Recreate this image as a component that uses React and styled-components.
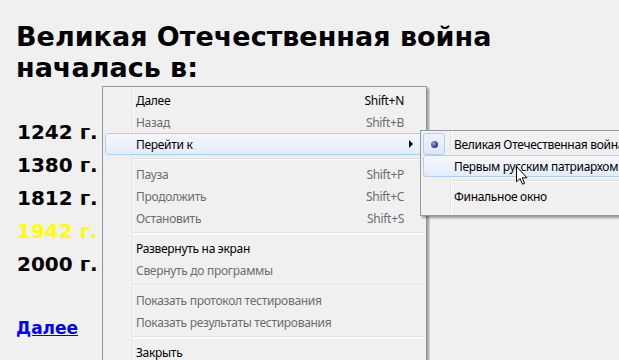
import React from "react";
import styled, { createGlobalStyle } from "styled-components";

const Global = createGlobalStyle`
  html, body { margin: 0; padding: 0; background: #f0f0f0; overflow: hidden; }
  body { width: 619px; height: 360px; position: relative; }
`;

const Page = styled.div`
  position: relative;
  width: 619px;
  height: 360px;
  overflow: hidden;
  background: #f0f0f0;
  padding-left: 16px;
  box-sizing: border-box;
  font-family: "DejaVu Sans", Verdana, sans-serif;
`;

const Title = styled.h1`
  margin: 21px 0 0;
  font-size: 27px;
  line-height: 31px;
  font-weight: bold;
  color: #000;
  width: 560px;
`;

const Years = styled.ul`
  list-style: none;
  margin: 33px 0 0;
  padding: 0 0 0 1px;
`;

const Year = styled.li`
  font-size: 20px;
  line-height: 33px;
  font-weight: bold;
  color: ${(p) => (p.$correct ? "#ffff00" : "#000")};
`;

const NextLink = styled.a`
  display: inline-block;
  margin-top: 35px;
  font-size: 17px;
  line-height: 24px;
  font-weight: bold;
  color: #0000ff;
  text-decoration: underline;
`;

const Menu = styled.div`
  position: absolute;
  left: ${(p) => p.$left}px;
  top: ${(p) => p.$top}px;
  width: ${(p) => p.$width}px;
  box-sizing: border-box;
  padding: 2px 2px ${(p) => p.$padBottom}px;
  border: 1px solid #979797;
  box-shadow: 2px 2px 2px rgba(0, 0, 0, 0.35);
  background:
    linear-gradient(to right, transparent 29px, #e2e3e3 29px, #e2e3e3 30px, #ffffff 30px, #ffffff 31px, transparent 31px),
    #f0f0f0;
  font-family: "Noto Sans", "Open Sans", sans-serif;
  font-size: 12px;
  letter-spacing: -0.3px;
  white-space: nowrap;
`;

const Item = styled.div`
  position: relative;
  display: flex;
  align-items: center;
  height: 22px;
  box-sizing: border-box;
  padding: 0 ${(p) => (p.$arrow ? 10 : 19)}px 0 30px;
  color: ${(p) => (p.$disabled ? "#6d6d6d" : "#000")};
  border: 1px solid ${(p) => (p.$hover ? "#aecff7" : "transparent")};
  border-radius: 3px;
  background: ${(p) =>
    p.$hover ? "linear-gradient(to bottom, #f4f8fd 0%, #edf3fb 50%, #e3ecf9 100%)" : "transparent"};
`;

const Label = styled.span`
  flex: 1;
`;

const Shortcut = styled.span`
  margin-left: 20px;
`;

const Arrow = styled.span`
  width: 0;
  height: 0;
  border-top: 4px solid transparent;
  border-bottom: 4px solid transparent;
  border-left: 4px solid #000;
`;

const Separator = styled.div`
  height: 8px;
  margin-left: 28px;
  display: flex;
  flex-direction: column;
  justify-content: center;
  &::before {
    content: "";
    display: block;
    height: 1px;
    background: #e0e0e0;
  }
  &::after {
    content: "";
    display: block;
    height: 1px;
    background: #ffffff;
  }
`;

const CheckBox = styled.span`
  position: absolute;
  left: -1px;
  top: -1px;
  width: 22px;
  height: 22px;
  box-sizing: border-box;
  border: 1px solid #aecff7;
  border-radius: 3px;
  background: linear-gradient(to bottom, #eef4fc, #dde8f8);
  display: flex;
  align-items: center;
  justify-content: center;
`;

const Dot = styled.span`
  width: 7px;
  height: 7px;
  border-radius: 50%;
  background: radial-gradient(circle at 35% 35%, #9a9ee8 0%, #3d3f9c 60%, #24265e 100%);
`;

const Cursor = styled.svg`
  position: absolute;
  left: 516px;
  top: 166px;
`;

const mainItems = [
  { t: "Далее", s: "Shift+N" },
  { t: "Назад", s: "Shift+B", d: true },
  { t: "Перейти к", arrow: true, hover: true },
  "sep",
  { t: "Пауза", s: "Shift+P", d: true },
  { t: "Продолжить", s: "Shift+C", d: true },
  { t: "Остановить", s: "Shift+S", d: true },
  "sep",
  { t: "Развернуть на экран" },
  { t: "Свернуть до программы", d: true },
  "sep",
  { t: "Показать протокол тестирования", d: true },
  { t: "Показать результаты тестирования", d: true },
  "sep",
  { t: "Закрыть" },
];

export default function App() {
  return (
    <>
      <Global />
      <Page>
        <Title>Великая Отечественная война началась в:</Title>
        <Years>
          <Year>1242 г.</Year>
          <Year>1380 г.</Year>
          <Year>1812 г.</Year>
          <Year $correct>1942 г.</Year>
          <Year>2000 г.</Year>
        </Years>
        <NextLink href="#">Далее</NextLink>

        <Menu $left={102} $top={86} $width={325} $padBottom={2}>
          {mainItems.map((it, i) =>
            it === "sep" ? (
              <Separator key={i} />
            ) : (
              <Item key={i} $disabled={it.d} $hover={it.hover} $arrow={it.arrow}>
                <Label>{it.t}</Label>
                {it.s && <Shortcut>{it.s}</Shortcut>}
                {it.arrow && <Arrow />}
              </Item>
            )
          )}
        </Menu>

        <Menu $left={420} $top={130} $width={230} $padBottom={8}>
          <Item>
            <CheckBox>
              <Dot />
            </CheckBox>
            <Label>Великая Отечественная война</Label>
          </Item>
          <Item $hover>
            <Label>Первым русским патриархом</Label>
          </Item>
          <Separator />
          <Item>
            <Label>Финальное окно</Label>
          </Item>
        </Menu>

        <Cursor width="12" height="19" viewBox="0 0 12 19">
          <path
            d="M0.5 0.5 L0.5 16 L4 12.5 L6.5 18.2 L8.6 17.3 L6.2 11.8 L11 11.8 Z"
            fill="#fff"
            stroke="#000"
            strokeWidth="1"
            strokeLinejoin="miter"
          />
        </Cursor>
      </Page>
    </>
  );
}
